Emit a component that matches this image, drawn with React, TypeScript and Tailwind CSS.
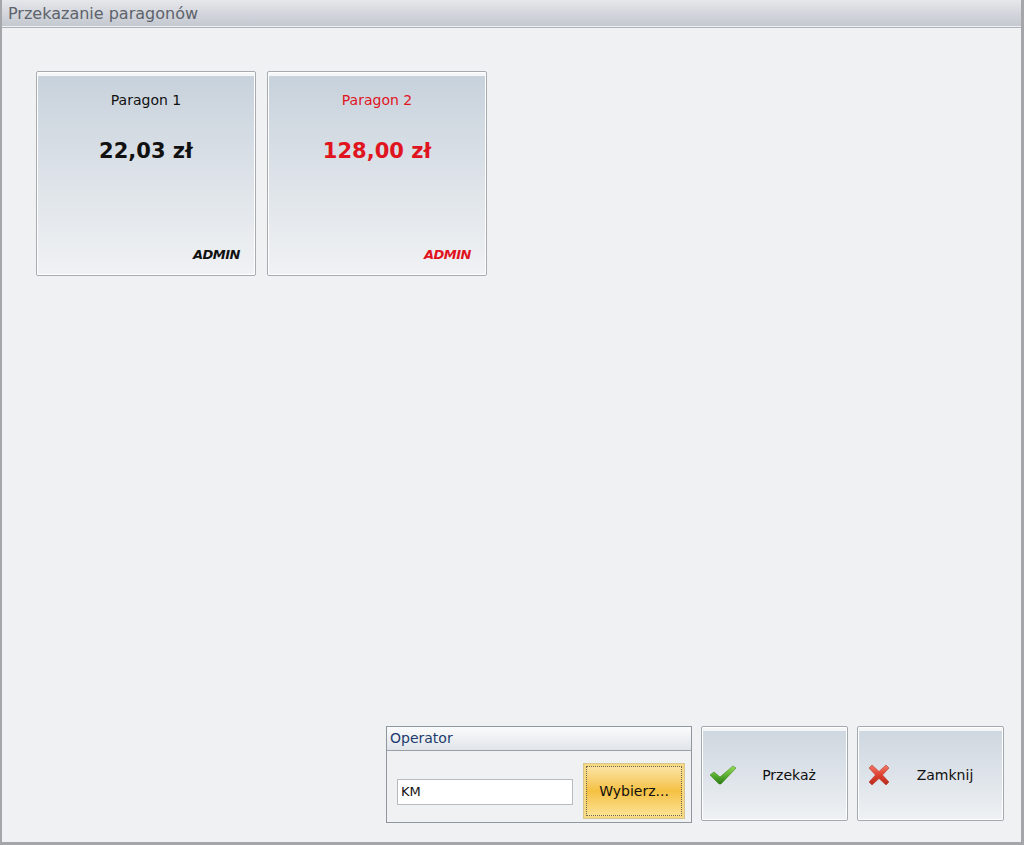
import React from 'react';

const font = { fontFamily: '"DejaVu Sans", Verdana, sans-serif' };

interface Receipt {
  name: string;
  amount: string;
  user: string;
  highlight: boolean;
}

const receipts: Receipt[] = [
  { name: 'Paragon 1', amount: '22,03 zł', user: 'ADMIN', highlight: false },
  { name: 'Paragon 2', amount: '128,00 zł', user: 'ADMIN', highlight: true },
];

function CheckIcon() {
  return (
    <svg width="28" height="22" viewBox="0 0 28 22">
      <defs>
        <linearGradient id="chk" x1="0" y1="0" x2="0" y2="1">
          <stop offset="0" stopColor="#9be05a" />
          <stop offset="0.6" stopColor="#4fa62a" />
          <stop offset="1" stopColor="#2f7a18" />
        </linearGradient>
      </defs>
      <path
        d="M1 11 L5 8 L11 13 L24 2 L27 4 L12 20 L10 20 Z"
        fill="url(#chk)"
        stroke="#3d8a1f"
        strokeWidth="0.6"
        strokeLinejoin="round"
      />
    </svg>
  );
}

function CrossIcon() {
  return (
    <svg width="24" height="22" viewBox="0 0 24 22">
      <defs>
        <linearGradient id="crs" x1="0" y1="0" x2="0" y2="1">
          <stop offset="0" stopColor="#f47a6a" />
          <stop offset="0.5" stopColor="#e0402e" />
          <stop offset="1" stopColor="#b52a1c" />
        </linearGradient>
      </defs>
      <path
        d="M2 4 L5 1 L12 7.5 L19 1 L22 4 L15.5 11 L22 18 L19 21 L12 14.5 L5 21 L2 18 L8.5 11 Z"
        fill="url(#crs)"
        stroke="#b83a2a"
        strokeWidth="0.6"
        strokeLinejoin="round"
      />
    </svg>
  );
}

function ReceiptCard({ r }: { r: Receipt }) {
  const color = r.highlight ? 'text-[#e0141e]' : 'text-[#111]';
  return (
    <div className="w-[220px] h-[205px] border border-[#a7abb0] rounded-[2px] bg-white p-px">
      <div className="h-full flex flex-col bg-gradient-to-b from-[#c8d2dc] via-[#dce2e8] to-[#f0f2f4] border-t-[3px] border-[#f4f6f8]">
        <div className={`text-[14px] text-center mt-[14px] ${color}`}>{r.name}</div>
        <div className={`text-[21px] font-bold text-center mt-[25px] ${color}`}>{r.amount}</div>
        <div className="flex-1" />
        <div className={`text-[13px] font-bold italic text-right pr-[14px] pb-[10px] tracking-[-0.5px] ${color}`}>
          {r.user}
        </div>
      </div>
    </div>
  );
}

function ActionButton({ icon, label }: { icon: React.ReactNode; label: string }) {
  return (
    <div className="w-[147px] h-[95px] border border-[#a3a9b0] rounded-[2px] bg-white p-px">
      <div className="h-full flex items-center bg-gradient-to-b from-[#cfd7e0] via-[#dde3e9] to-[#eef1f4] border-t-[3px] border-[#f4f6f8] pl-[5px]">
        <div className="w-[30px] flex justify-center">{icon}</div>
        <div className="flex-1 text-center text-[14px] text-[#111] pr-[6px]">{label}</div>
      </div>
    </div>
  );
}

export default function App() {
  return (
    <div
      className="w-[1024px] h-[845px] flex flex-col bg-[#f0f1f2] border-l-2 border-r-[3px] border-b-[3px] border-[#a4a6aa] overflow-hidden"
      style={font}
    >
      <div className="h-[28px] shrink-0 flex items-center pl-[6px] bg-gradient-to-b from-[#e6e7eb] via-[#d3d6dc] to-[#c3c7cf] border-b border-[#aeb2b8] shadow-[inset_0_-1px_0_#eef0f4]">
        <span className="text-[16px] text-[#5d636b]">Przekazanie paragonów</span>
      </div>

      <div className="flex gap-[11px] pl-[34px] pt-[43px]">
        {receipts.map((r) => (
          <ReceiptCard key={r.name} r={r} />
        ))}
      </div>

      <div className="flex-1" />

      <div className="flex items-start justify-end gap-[9px] pr-[17px] pb-[19px]">
        <div className="w-[306px] h-[97px] border border-[#8f969e] flex flex-col bg-[#f0f1f2]">
          <div className="h-[24px] flex items-center pl-[3px] bg-gradient-to-b from-[#fafbfc] to-[#e1e5ea] border-b border-[#9aa1a9]">
            <span className="text-[14px] text-[#1d3b6c]">Operator</span>
          </div>
          <div className="flex-1 flex items-start pl-[10px] pt-[12px] gap-[10px]">
            <div className="mt-[16px] w-[176px] h-[26px] bg-white border border-[#b8bcc0] flex items-center pl-[3px] text-[13px] text-[#111]">
              KM
            </div>
            <div className="w-[102px] h-[56px] border border-[#d8c690] p-[2px] bg-[#f6d982]">
              <div className="h-full flex items-center justify-center border border-dotted border-[#6e6650] bg-gradient-to-b from-[#fbe3a0] via-[#f5c140] to-[#fbe18f] text-[14px] text-[#111]">
                Wybierz...
              </div>
            </div>
          </div>
        </div>
        <ActionButton icon={<CheckIcon />} label="Przekaż" />
        <ActionButton icon={<CrossIcon />} label="Zamknij" />
      </div>
    </div>
  );
}
